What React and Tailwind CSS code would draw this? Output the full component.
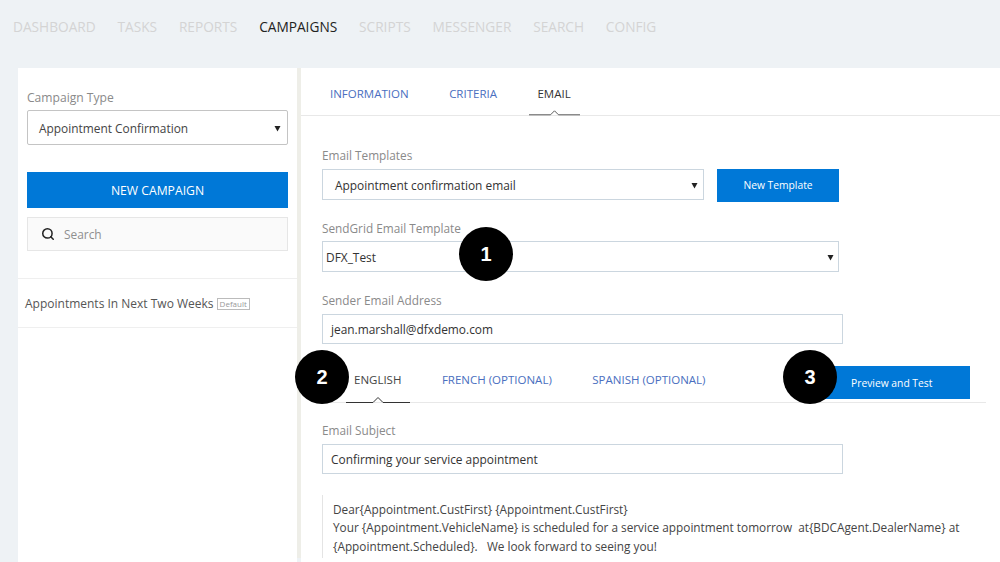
import { Search } from 'lucide-react';

const NAV = ['DASHBOARD', 'TASKS', 'REPORTS', 'CAMPAIGNS', 'SCRIPTS', 'MESSENGER', 'SEARCH', 'CONFIG'];

function Caret() {
  return (
    <svg width="7" height="7" viewBox="0 0 7 7" className="shrink-0">
      <path d="M0.5 1h6L3.5 6.5z" fill="#222" />
    </svg>
  );
}

function Field({ className, children }) {
  return (
    <div className={`flex items-center bg-white border border-[#cbd6df] pt-[2px] text-[11.9px] text-[#333] ${className}`}>
      {children}
    </div>
  );
}

function Label({ className = '', children }) {
  return <div className={`text-[11.8px] leading-[16px] text-[#8a8a8a] ${className}`}>{children}</div>;
}

function Notch({ className }) {
  return (
    <svg width="64" height="8" viewBox="0 0 64 8" fill="none" className={className}>
      <path d="M0 7.5h27l5-5 5 5h27" stroke="#333" />
    </svg>
  );
}

function Badge({ className, children }) {
  return (
    <div className={`absolute w-[54px] h-[54px] rounded-full bg-black text-white text-[20px] font-bold font-['Liberation_Sans',sans-serif] flex items-center justify-center ${className}`}>
      {children}
    </div>
  );
}

export default function App() {
  return (
    <div className="relative w-[1000px] h-[562px] overflow-hidden bg-[#eef2f5] font-['Open_Sans',sans-serif]">
      {/* Top nav */}
      <nav className="h-[68px] pl-[13px] pt-[17px] flex gap-[21.8px] text-[13.7px] leading-[19px] text-[#d4d4d4]">
        {NAV.map((item) => (
          <span key={item} className={item === 'CAMPAIGNS' ? 'text-[#222]' : ''}>{item}</span>
        ))}
      </nav>

      <div className="flex h-[494px] ml-[18px]">
        {/* Sidebar */}
        <aside className="w-[279px] bg-white shrink-0">
          <div className="px-[9px] pt-[22px]">
            <Label className="text-[12.1px]">Campaign Type</Label>
            <div className="mt-[4px] h-[35px] w-[261px] flex items-center justify-between pl-[11px] pr-[6px] pt-[2px] bg-white border border-[#c4c4c4] rounded-[2px] text-[11.9px] text-[#444]">
              Appointment Confirmation
              <Caret />
            </div>
            <div className="mt-[27px] h-[36px] w-[261px] flex items-center justify-center pt-[2px] bg-[#0078d7] text-white text-[12.2px]">
              NEW CAMPAIGN
            </div>
            <div className="mt-[9px] h-[34px] w-[261px] flex items-center gap-[9px] pl-[13px] bg-[#fafafa] border border-[#e6e6e6] text-[11.9px] text-[#8f8f8f]">
              <Search size={14} strokeWidth={2.6} className="text-[#222]" />
              <span className="pt-[2px]">Search</span>
            </div>
          </div>
          <div className="mt-[27px] h-[50px] border-y border-[#efefef] pl-[7px] pt-[2px] flex items-center gap-[3px] text-[12px] text-[#555]">
            Appointments In Next Two Weeks
            <span className="border border-[#bbb] px-[2px] text-[8px] leading-[10px] text-[#999]">Default</span>
          </div>
        </aside>

        {/* Divider */}
        <div className="w-[4px] h-[490px] bg-[#eeeee8] shrink-0 self-start" />

        {/* Main */}
        <main className="flex-1 bg-white">
          <div className="relative h-[48px] border-b border-[#e8e8e8] flex pl-[29px] pt-[18px] gap-[40.5px] text-[11.5px] leading-[16px] text-[#4a6fc0]">
            <span>INFORMATION</span>
            <span>CRITERIA</span>
            <span className="text-[#333]">EMAIL</span>
            <Notch className="absolute left-[228px] top-[40px] w-[51px]" />
          </div>

          <div className="pl-[21px] pt-[31px]">
            <Label>Email Templates</Label>
            <div className="mt-[6px] flex gap-[13px]">
              <Field className="w-[382px] h-[31px] pl-[12px] pr-[5px] justify-between">
                Appointment confirmation email
                <Caret />
              </Field>
              <div className="w-[122px] h-[33px] pt-[1px] bg-[#0078d7] text-white text-[10.3px] font-medium flex items-center justify-center">
                New Template
              </div>
            </div>

            <Label className="mt-[18px]">SendGrid Email Template</Label>
            <Field className="mt-[5px] w-[517px] h-[31px] pl-[3px] pr-[4px] justify-between">
              DFX_Test
              <Caret />
            </Field>

            <Label className="mt-[20px]">Sender Email Address</Label>
            <Field className="mt-[6px] w-[521px] h-[30px] pl-[8px]">jean.marshall@dfxdemo.com</Field>

            {/* Language tabs */}
            <div className="relative mt-[22px] w-[664px] h-[37px] border-b border-[#e8e8e8] flex pl-[32px] pt-[6px] gap-[40.5px] text-[11.5px] leading-[16px] text-[#4a6fc0]">
              <span className="text-[#444]">ENGLISH</span>
              <span>FRENCH (OPTIONAL)</span>
              <span>SPANISH (OPTIONAL)</span>
              <Notch className="absolute left-[24px] top-[29px]" />
              <div className="absolute left-[498px] top-0 w-[150px] h-[33px] pl-[31px] bg-[#0078d7] text-white text-[10.3px] font-medium flex items-center">
                Preview and Test
              </div>
            </div>

            <Label className="mt-[19px]">Email Subject</Label>
            <Field className="mt-[6px] w-[521px] h-[30px] pl-[8px]">Confirming your service appointment</Field>

            <div className="mt-[21px] pl-[10px] pt-[5px] h-[63px] border-l border-[#e4e4e4] text-[11.8px] leading-[18.4px] text-[#444] whitespace-pre-wrap">
              <div>{'Dear{Appointment.CustFirst} {Appointment.CustFirst}'}</div>
              <div>{'Your {Appointment.VehicleName} is scheduled for a service appointment tomorrow  at{BDCAgent.DealerName} at'}</div>
              <div>{'{Appointment.Scheduled}.   We look forward to seeing you!'}</div>
            </div>
          </div>
        </main>
      </div>

      {/* Numbered callouts */}
      <Badge className="left-[459px] top-[227px]">1</Badge>
      <Badge className="left-[295px] top-[350px]">2</Badge>
      <Badge className="left-[783px] top-[350px]">3</Badge>
    </div>
  );
}
